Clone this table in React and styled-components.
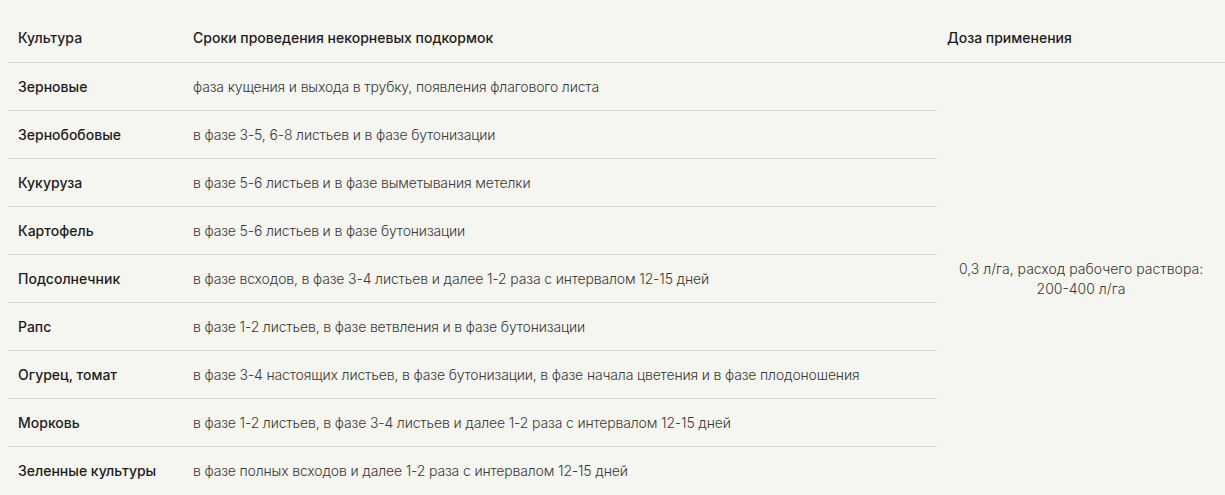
import React from 'react';
import styled, { createGlobalStyle } from 'styled-components';

const GlobalStyle = createGlobalStyle`
  body {
    margin: 0;
    background: #f6f6f0;
    font-family: Inter, "Noto Sans", sans-serif;
  }
  *, *::before, *::after {
    box-sizing: border-box;
  }
`;

const Page = styled.div`
  padding: 14px 0 0 8px;
`;

const Table = styled.table`
  width: 1217px;
  border-collapse: collapse;
  table-layout: fixed;
  font-size: 14px;
  color: #2b2b2b;
`;

const HeadCell = styled.th`
  height: 48px;
  padding: 0 10px;
  text-align: left;
  font-weight: 500;
  color: #1c1c1c;
  border-bottom: 1px solid #d9d9d1;
  width: ${p => p.$w || 'auto'};
`;

const Row = styled.tr`
  height: 48px;
  & + & > td:not([rowspan]) {
    border-top: 1px solid #d9d9d1;
  }
`;

const NameCell = styled.td`
  padding: 0 10px;
  font-weight: 500;
  color: #1c1c1c;
`;

const Cell = styled.td`
  padding: 0 10px;
  font-weight: 300;
  color: #383838;
  letter-spacing: -0.15px;
`;

const DoseCell = styled.td`
  padding: 0 6px;
  text-align: center;
  vertical-align: middle;
  font-weight: 300;
  color: #383838;
  line-height: 20px;
  padding-top: 2px;
`;

const rows = [
  ['Зерновые', 'фаза кущения и выхода в трубку, появления флагового листа'],
  ['Зернобобовые', 'в фазе 3-5, 6-8 листьев и в фазе бутонизации'],
  ['Кукуруза', 'в фазе 5-6 листьев и в фазе выметывания метелки'],
  ['Картофель', 'в фазе 5-6 листьев и в фазе бутонизации'],
  ['Подсолнечник', 'в фазе всходов, в фазе 3-4 листьев и далее 1-2 раза с интервалом 12-15 дней'],
  ['Рапс', 'в фазе 1-2 листьев, в фазе ветвления и в фазе бутонизации'],
  ['Огурец, томат', 'в фазе 3-4 настоящих листьев, в фазе бутонизации, в фазе начала цветения и в фазе плодоношения'],
  ['Морковь', 'в фазе 1-2 листьев, в фазе 3-4 листьев и далее 1-2 раза с интервалом 12-15 дней'],
  ['Зеленные культуры', 'в фазе полных всходов и далее 1-2 раза с интервалом 12-15 дней'],
];

export default function App() {
  return (
    <Page>
      <GlobalStyle />
      <Table>
        <thead>
          <tr>
            <HeadCell $w="175px">Культура</HeadCell>
            <HeadCell $w="754px">Сроки проведения некорневых подкормок</HeadCell>
            <HeadCell>Доза применения</HeadCell>
          </tr>
        </thead>
        <tbody>
          {rows.map(([name, term], i) => (
            <Row key={name}>
              <NameCell>{name}</NameCell>
              <Cell>{term}</Cell>
              {i === 0 && (
                <DoseCell rowSpan={rows.length}>
                  0,3 л/га, расход рабочего раствора:
                  <br />
                  200-400 л/га
                </DoseCell>
              )}
            </Row>
          ))}
        </tbody>
      </Table>
    </Page>
  );
}
